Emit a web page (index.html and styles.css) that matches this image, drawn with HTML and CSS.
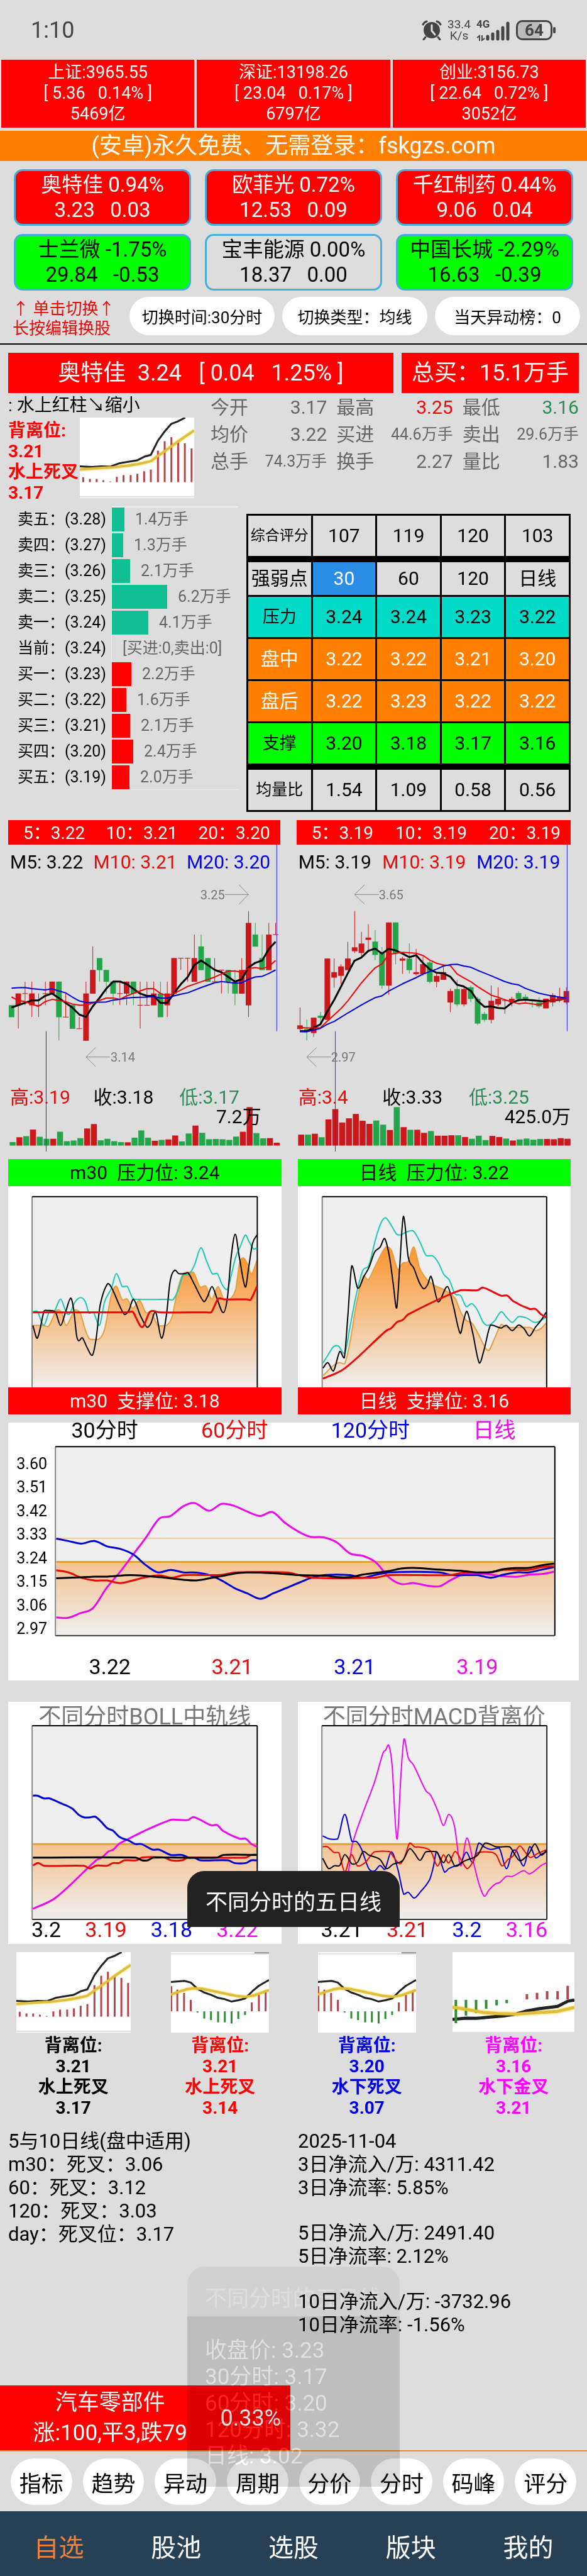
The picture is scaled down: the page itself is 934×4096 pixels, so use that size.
FILE: index.html
```html
<!DOCTYPE html>
<html lang="zh-CN">
<head>
<meta charset="utf-8">
<meta name="viewport" content="width=device-width, initial-scale=1">
<title>自选</title>
<link rel="stylesheet" href="styles.css">
</head>
<body>
<svg width="0" height="0" class="defs" aria-hidden="true">
  <defs>
    <linearGradient id="fade" x1="0" y1="0" x2="0" y2="1">
      <stop offset="0" stop-color="#ff8000" stop-opacity=".8"/>
      <stop offset="1" stop-color="#ff8000" stop-opacity="0"/>
    </linearGradient>
    <linearGradient id="fadeSoft" x1="0" y1="0" x2="0" y2="1">
      <stop offset="0" stop-color="#ff8000" stop-opacity=".4"/>
      <stop offset="1" stop-color="#ff8000" stop-opacity="0"/>
    </linearGradient>
  </defs>
</svg>
<div class="page">
  <header class="status">
    <span class="clock">1:10</span>
    <div class="status-icons">
      <svg class="alarm" viewBox="0 0 32 32" width="32" height="32"><circle cx="16" cy="16" r="13" fill="#444"/><path d="M2 7 Q4 3 8 2M30 7Q28 3 24 2M6 27l-3 4M26 27l3 4" stroke="#444" stroke-width="3" fill="none" stroke-linecap="round"/><path d="M16 8v9l5 6" stroke="#ddd" stroke-width="3" fill="none" stroke-linecap="round"/></svg>
      <span class="speed">33.4<br>K/s</span>
      <div class="signal"><b>4G</b>
        <svg viewBox="0 0 54 32" width="54" height="32"><path d="M5 31v-8l-4 3M9 22v8l4-3" stroke="#444" stroke-width="2" fill="none"/><path d="M18 28v-4M26 28v-8M34 28V16M42 28V10M50 28V3" stroke="#444" stroke-width="5" stroke-linecap="round"/></svg>
      </div>
      <div class="battery"><span>64</span></div>
    </div>
  </header>

  <section class="indices">
    <div>上证:3965.55<br>[ 5.36 &nbsp; 0.14% ]<br>5469亿</div>
    <div>深证:13198.26<br>[ 23.04 &nbsp; 0.17% ]<br>6797亿</div>
    <div>创业:3156.73<br>[ 22.64 &nbsp; 0.72% ]<br>3052亿</div>
  </section>
  <p class="promo">(安卓)永久免费、无需登录：fskgzs.com</p>

  <section class="stocks">
    <button class="up">奥特佳 0.94%<br>3.23 &nbsp; 0.03</button>
    <button class="up">欧菲光 0.72%<br>12.53 &nbsp; 0.09</button>
    <button class="up">千红制药 0.44%<br>9.06 &nbsp; 0.04</button>
    <button class="down">士兰微 -1.75%<br>29.84 &nbsp; -0.53</button>
    <button>宝丰能源 0.00%<br>18.37 &nbsp; 0.00</button>
    <button class="down">中国长城 -2.29%<br>16.63 &nbsp; -0.39</button>
  </section>

  <section class="switches">
    <p>↑ 单击切换↑<br>长按编辑换股</p>
    <button>切换时间:30分时</button>
    <button>切换类型：均线</button>
    <button>当天异动榜：0</button>
  </section>

  <section class="title-row">
    <h1>奥特佳&ensp;3.24 &ensp;[ 0.04 &nbsp; 1.25% ]</h1>
    <h2>总买：15.1万手</h2>
  </section>

  <section class="info">
    <div>
      <p class="trend">: 水上红柱↘缩小</p>
      <div class="signal-row">
        <p>背离位:<br>3.21<br>水上死叉<br>3.17</p>
        <svg class="thumb" data-thumb="rise"></svg>
      </div>
    </div>
    <dl class="quotes">
      <div><dt>今开</dt><dd>3.17</dd></div><div><dt>最高</dt><dd class="red">3.25</dd></div><div><dt>最低</dt><dd class="green">3.16</dd></div>
      <div><dt>均价</dt><dd>3.22</dd></div><div><dt>买进</dt><dd class="vol">44.6万手</dd></div><div><dt>卖出</dt><dd class="vol">29.6万手</dd></div>
      <div><dt>总手</dt><dd class="vol">74.3万手</dd></div><div><dt>换手</dt><dd>2.27</dd></div><div><dt>量比</dt><dd>1.83</dd></div>
    </dl>
  </section>

  <section class="depth">
    <ul class="book">
      <li><span>卖五：(3.28)</span><i class="ask" style="width:20px"></i><em>1.4万手</em></li>
      <li><span>卖四：(3.27)</span><i class="ask" style="width:18px"></i><em>1.3万手</em></li>
      <li><span>卖三：(3.26)</span><i class="ask" style="width:29px"></i><em>2.1万手</em></li>
      <li><span>卖二：(3.25)</span><i class="ask" style="width:88px"></i><em>6.2万手</em></li>
      <li><span>卖一：(3.24)</span><i class="ask" style="width:58px"></i><em>4.1万手</em></li>
      <li><span>当前：(3.24)</span><i></i><em>[买进:0,卖出:0]</em></li>
      <li><span>买一：(3.23)</span><i class="bid" style="width:31px"></i><em>2.2万手</em></li>
      <li><span>买二：(3.22)</span><i class="bid" style="width:23px"></i><em>1.6万手</em></li>
      <li><span>买三：(3.21)</span><i class="bid" style="width:29px"></i><em>2.1万手</em></li>
      <li><span>买四：(3.20)</span><i class="bid" style="width:34px"></i><em>2.4万手</em></li>
      <li><span>买五：(3.19)</span><i class="bid" style="width:28px"></i><em>2.0万手</em></li>
    </ul>
    <table class="score">
      <tbody>
        <tr><th scope="row" class="s">综合评分</th><td>107</td><td>119</td><td>120</td><td>103</td></tr>
        <tr class="head thick"><th scope="row">强弱点</th><td class="picked">30</td><td>60</td><td>120</td><td>日线</td></tr>
        <tr class="press"><th scope="row" class="m">压力</th><td>3.24</td><td>3.24</td><td>3.23</td><td>3.22</td></tr>
        <tr class="mid"><th scope="row">盘中</th><td>3.22</td><td>3.22</td><td>3.21</td><td>3.20</td></tr>
        <tr class="mid"><th scope="row">盘后</th><td>3.22</td><td>3.23</td><td>3.22</td><td>3.22</td></tr>
        <tr class="supp"><th scope="row" class="m">支撑</th><td>3.20</td><td>3.18</td><td>3.17</td><td>3.16</td></tr>
        <tr class="thick last"><th scope="row" class="n">均量比</th><td>1.54</td><td>1.09</td><td>0.58</td><td>0.56</td></tr>
      </tbody>
    </table>
  </section>

  <section class="pair kline">
    <article>
      <p class="ma-bar"><span>5：3.22</span><span>10：3.21</span><span>20：3.20</span></p>
      <div class="kchart">
        <svg data-k="m30" viewBox="22 144 730 1396" preserveAspectRatio="none"></svg>
        <div class="overlay">
          <p class="ma"><span>M5: 3.22</span><span class="r">M10: 3.21</span><span class="b">M20: 3.20</span></p>
          <p class="hl"><span class="r">高:3.19</span><span>收:3.18</span><span class="g">低:3.17</span></p>
          <p class="volume">7.2万</p>
        </div>
        <span class="mark high-a">3.25</span><span class="mark low-a">3.14</span>
      </div>
    </article>
    <article>
      <p class="ma-bar"><span>5：3.19</span><span>10：3.19</span><span>20：3.19</span></p>
      <div class="kchart">
        <svg data-k="day" viewBox="795 144 730 1396" preserveAspectRatio="none"></svg>
        <div class="overlay">
          <p class="ma"><span>M5: 3.19</span><span class="r">M10: 3.19</span><span class="b">M20: 3.19</span></p>
          <p class="hl"><span class="r">高:3.4</span><span>收:3.33</span><span class="g">低:3.25</span></p>
          <p class="volume">425.0万</p>
        </div>
        <span class="mark high-b">3.65</span><span class="mark low-b">2.97</span>
      </div>
    </article>
  </section>

  <section class="pair levels">
    <article>
      <h3 class="lv-top">m30&ensp;压力位: 3.24</h3>
      <svg data-plot="lv30" viewBox="22 223 730 1180" preserveAspectRatio="none"></svg>
      <h3 class="lv-bottom">m30&ensp;支撑位: 3.18</h3>
    </article>
    <article>
      <h3 class="lv-top">日线&ensp;压力位: 3.22</h3>
      <svg data-plot="lvday" viewBox="795 223 730 1180" preserveAspectRatio="none"></svg>
      <h3 class="lv-bottom">日线&ensp;支撑位: 3.16</h3>
    </article>
  </section>

  <section class="ma5">
    <p class="legend"><span>30分时</span><span class="r">60分时</span><span class="b">120分时</span><span class="p">日线</span></p>
    <div class="ma5-plot">
      <ol class="axis"><li>3.60</li><li>3.51</li><li>3.42</li><li>3.33</li><li>3.24</li><li>3.15</li><li>3.06</li><li>2.97</li></ol>
      <svg data-plot="ma5" viewBox="146 191 1338 1039" preserveAspectRatio="none"></svg>
    </div>
    <p class="values"><span>3.22</span><span class="r">3.21</span><span class="b">3.21</span><span class="p">3.19</span></p>
  </section>

  <section class="pair studies">
    <article>
      <h3>不同分时BOLL中轨线</h3>
      <svg data-plot="boll" viewBox="84 201 606 1221" preserveAspectRatio="none"></svg>
      <p><span>3.2</span><span class="r">3.19</span><span class="b">3.18</span><span class="p">3.22</span></p>
    </article>
    <article>
      <h3>不同分时MACD背离价</h3>
      <svg data-plot="macd" viewBox="858 201 604 1221" preserveAspectRatio="none"></svg>
      <p><span>3.21</span><span class="r">3.21</span><span class="b">3.2</span><span class="p">3.16</span></p>
    </article>
    <div class="toast" role="status">不同分时的五日线</div>
  </section>

  <section class="patterns">
    <figure><svg class="thumb" data-thumb="rise"></svg><figcaption>背离位:<br>3.21<br>水上死叉<br>3.17</figcaption></figure>
    <figure class="r"><svg class="thumb narrow" data-thumb="cross"></svg><figcaption>背离位:<br>3.21<br>水上死叉<br>3.14</figcaption></figure>
    <figure class="b"><svg class="thumb narrow" data-thumb="cross"></svg><figcaption>背离位:<br>3.20<br>水下死叉<br>3.07</figcaption></figure>
    <figure class="p"><svg class="thumb wide" data-thumb="golden"></svg><figcaption>背离位:<br>3.16<br>水下金叉<br>3.21</figcaption></figure>
  </section>

  <section class="pair notes">
    <p>5与10日线(盘中适用)<br>m30：死叉：3.06<br>60：死叉：3.12<br>120：死叉：3.03<br>day：死叉位：3.17</p>
    <div>
      <p>2025-11-04<br>3日净流入/万: 4311.42<br>3日净流率: 5.85%</p>
      <p>5日净流入/万: 2491.40<br>5日净流率: 2.12%</p>
      <p>10日净流入/万: -3732.96<br>10日净流率: -1.56%</p>
    </div>
  </section>

  <footer>
    <div class="sector"><p>汽车零部件<br>涨:100,平3,跌79</p><strong>0.33%</strong></div>
    <div class="tools">
      <button>指标</button><button>趋势</button><button>异动</button><button>周期</button><button>分价</button><button>分时</button><button>码峰</button><button>评分</button>
    </div>
    <nav>
      <a href="#" class="on">自选</a><a href="#">股池</a><a href="#">选股</a><a href="#">版块</a><a href="#">我的</a>
    </nav>
  </footer>

  <div class="ghost">
    <p class="ghost-title"><span>不同分时的五日线</span></p>
    <p class="ghost-body"><span>收盘价: 3.23<br>30分时: 3.17<br>60分时: 3.20<br>120分时: 3.32<br>日线: 3.02</span></p>
  </div>
</div>
<script src="charts.js"></script>
</body>
</html>
```
FILE: styles.css
```css
* { box-sizing: border-box; }
body { margin: 0; background: #ddd; color: #000; font-family: Roboto, "Noto Sans CJK SC", sans-serif; font-size: 30px; }
p, h1, h2, h3, ul, ol, dl, dd, figure { margin: 0; padding: 0; font-weight: 400; }
ul, ol { list-style: none; }
button { border: 0; padding: 0; margin: 0; background: none; font: inherit; color: #000; white-space: nowrap; }
svg { display: block; }
.defs { position: absolute; }
.page { position: relative; min-height: 100vh; display: flex; flex-direction: column; overflow: hidden; }
.r, .red { color: #e60a0a; }
.b { color: #0000e6; }
.g, .green { color: #2e8b57; }
.p { color: #eb0aeb; }

.status { height: 95px; padding: 0 50px 0 49px; display: flex; justify-content: space-between; align-items: center; color: #444; }
.clock { font-size: 36px; }
.status-icons { display: flex; align-items: center; gap: 9px; }
.speed { font-size: 19px; line-height: 18px; text-align: center; }
.signal { height: 36px; width: 54px; display: flex; flex-direction: column; font-size: 17px; line-height: 16px; }
.signal svg { margin-top: -12px; }
.battery { position: relative; width: 58px; height: 32px; border: 3px solid #444; border-radius: 10px; margin-right: 5px; background: linear-gradient(90deg, #bbb 68%, #ddd 68%); font-size: 26px; line-height: 27px; font-weight: 700; text-align: center; }
.battery::after { content: ""; position: absolute; right: -8px; top: 8px; width: 4px; height: 10px; border-radius: 2px; background: #444; }

.indices { display: grid; grid-template-columns: repeat(3, 1fr); gap: 4px; padding: 0 2px; margin-bottom: 5px; }
.indices div { background: #f00; color: #fff; text-align: center; font-size: 27px; line-height: 33px; padding: 4px 0 5px; }
.promo { background: #ff8000; color: #fff; text-align: center; font-size: 36px; line-height: 48px; height: 48px; }

.stocks { display: grid; grid-template-columns: repeat(3, 1fr); gap: 13px 22px; padding: 13px 22px 0; }
.stocks button { height: 90px; border: 3px solid #46aedc; border-radius: 14px; font-size: 33px; line-height: 40px; }
.stocks .up { background: #f00; color: #fff; }
.stocks .down { background: #0f0; }

.switches { display: grid; grid-template-columns: 174px 1fr 1fr 1fr; gap: 12px; padding: 10px 11px 13px 20px; border-bottom: 2px solid #000; font-size: 26px; }
.switches p { color: #e60a0a; font-size: 26px; line-height: 31px; height: 61px; white-space: nowrap; padding-top: 4px; }
.switches button { height: 61px; background: #fff; border-radius: 31px; }

.title-row { display: grid; grid-template-columns: 613fr 282fr; gap: 13px; padding: 13px 13px 0; }
.title-row h1, .title-row h2 { background: #f00; color: #fff; font-size: 36px; line-height: 64px; height: 64px; text-align: center; white-space: nowrap; }

.info { display: grid; grid-template-columns: 296px 1fr; gap: 26px; padding: 0 13px; height: 180px; }
.trend { font-size: 28px; line-height: 39px; }
.signal-row { display: flex; justify-content: space-between; align-items: flex-start; }
.signal-row p { color: #f00; font-size: 28px; line-height: 33px; font-weight: 700; padding-top: 4px; white-space: nowrap; }
.quotes { display: grid; grid-template-columns: repeat(3, 1fr); column-gap: 15px; align-content: start; line-height: 43px; color: #666; white-space: nowrap; padding-top: 1px; }
.quotes div { display: flex; justify-content: space-between; }
.quotes .vol { font-size: 25px; }
.quotes .red { color: #e60a0a; }
.quotes .green { color: #2e8b57; }

.depth { display: grid; grid-template-columns: 379fr 516fr; gap: 13px; padding-right: 26px; }
.book { margin-left: 28px; font-size: 25px; line-height: 41px; align-self: start; position: relative; }
.book::before { content: ""; position: absolute; left: 149px; right: 0; top: 0; bottom: 0; border: 1px solid #eee; border-width: 2px 0 1px 1px; }
.book li { height: 41px; display: flex; align-items: center; white-space: nowrap; }
.book span { width: 150px; }
.book i { height: 38px; position: relative; }
.book .ask { background: #11bf95; }
.book .bid { background: #f00; }
.book em { font-style: normal; color: #666; margin-left: 17px; }
.score { width: 100%; margin-top: 12px; background: #000; border-spacing: 3px; table-layout: fixed; text-align: center; }
.score th, .score td { padding: 0; height: 64px; line-height: 52px; background: #ddd; font-weight: 400; white-space: nowrap; background-clip: padding-box; }
.score .head th, .score .head td { height: 59px; }
.score .thick th, .score .thick td { border-top: 7px solid #000; }
.score .last th, .score .last td { height: 71px; }
.score .s { font-size: 23px; }
.score .m { font-size: 27px; }
.score .n { font-size: 25px; }
.score .picked { background-color: #2a8ee4; color: #fff; }
.score .press > * { background: #00dbc8; }
.score .mid > * { background: #ff8000; color: #fff; }
.score .supp > * { background: #0f0; }

.pair { display: grid; grid-template-columns: 1fr 1fr; gap: 26px; padding: 0 26px 0 13px; }
.kline { margin-top: 13px; }
.ma-bar { display: flex; justify-content: space-between; background: #f00; color: #fff; font-size: 28px; line-height: 41px; height: 39px; padding: 0 16px 0 24px; }
.kchart { display: grid; position: relative; }
.kchart svg, .overlay { grid-area: 1 / 1; }
.kchart svg { width: 100%; height: 488px; }
.overlay { display: flex; flex-direction: column; padding: 8px 0 41px 3px; white-space: nowrap; }
.overlay .ma { display: grid; grid-template-columns: 133fr 149fr 149fr; line-height: 40px; margin-bottom: auto; }
.overlay .hl { display: grid; grid-template-columns: 133fr 137fr 161fr; line-height: 35px; }
.overlay .volume { line-height: 28px; padding-left: 328px; }
.mark { position: absolute; font-size: 20px; line-height: 24px; color: #777; }
.high-a { right: 88px; top: 68px; }
.low-a { left: 163px; top: 326px; }
.high-b { left: 131px; top: 68px; }
.low-b { left: 55px; top: 326px; }

.levels { margin-top: 12px; }
.levels h3 { font-size: 30px; line-height: 43px; height: 43px; text-align: center; }
.levels svg { width: 100%; height: 320px; background: #fff; }
.lv-top { background: #0f0; }
.lv-bottom { background: #f00; color: #fff; }

.ma5 { margin: 13px 13px 0; background: #fff; height: 410px; font-size: 34px; }
.legend { display: flex; justify-content: space-evenly; line-height: 24px; }
.ma5-plot { display: grid; grid-template-columns: 62px 1fr; gap: 12px; padding: 13px 37px 0 0; }
.ma5-plot svg { width: 100%; height: 303px; }
.axis { height: 286px; margin-top: 17px; display: flex; flex-direction: column; justify-content: space-between; text-align: right; font-size: 25px; line-height: 24px; }
.values { display: flex; justify-content: space-evenly; line-height: 40px; margin-top: 28px; }

.studies { margin-top: 34px; position: relative; }
.studies article { background: #fff; height: 385px; padding: 0 37px; font-size: 34px; }
.studies h3 { height: 37px; line-height: 48px; font-size: 36px; color: #777; text-align: center; white-space: nowrap; display: flex; justify-content: center; }
.studies svg { width: 100%; height: 310px; }
.studies p { display: flex; justify-content: space-between; line-height: 30px; }
.toast { position: absolute; left: 50%; bottom: 27px; width: 338px; margin-left: -169px; height: 89px; padding-top: 6px; border-radius: 27px 27px 0 0; background: #222; color: #fff; font-size: 35px; line-height: 89px; text-align: center; }

.patterns { display: grid; grid-template-columns: repeat(4, 1fr); padding-top: 13px; text-align: center; }
.thumb { width: 182px; height: 128px; background: #fff; flex: none; }
.patterns .thumb { margin: 0 auto; }
.patterns .narrow { width: 156px; }
.patterns .wide { width: 194px; }
.patterns figcaption { font-size: 28px; line-height: 33px; font-weight: 700; padding-top: 4px; }
.patterns .r { color: #f00; }
.patterns .p { color: #f0f; }

.notes { margin-top: 18px; padding-right: 0; font-size: 31px; line-height: 37px; white-space: nowrap; grid-template-columns: 435fr 460fr; }
.notes div p + p { margin-top: 35px; }

footer { margin-top: auto; }
.sector { width: 462px; height: 103px; background: #f00; color: #fff; display: flex; align-items: center; font-size: 36px; padding: 0 15px 0 0; }
.sector p { flex: 1; text-align: center; font-size: 35px; line-height: 48px; }
.sector strong { font-weight: 400; }
.tools { border-top: 2px solid #e8862c; display: grid; grid-template-columns: repeat(8, 1fr); gap: 17px; padding: 11px 17px 10px; }
.tools button { height: 74px; border-radius: 37px; background: #fff; font-size: 35px; }
nav { height: 103px; background: #284053; display: grid; grid-template-columns: repeat(5, 1fr); align-items: center; text-align: center; font-size: 40px; }
nav a { color: #fff; text-decoration: none; padding-top: 6px; }
nav .on { color: #f0803c; }

.ghost { position: absolute; left: 50%; bottom: 142px; width: 338px; height: 350px; margin-left: -169px; border-radius: 27px 27px 0 0; background: rgba(0, 0, 0, .05); font-size: 35px; pointer-events: none; }
.ghost p { padding-left: 28px; white-space: nowrap; }
.ghost span { display: block; mix-blend-mode: plus-lighter; }
.ghost-title { height: 79px; line-height: 103px; color: #0c0c0c; }
.ghost-body { height: 271px; padding-top: 34px; line-height: 42px; background: rgba(0, 0, 0, .09); color: #232323; }
```
FILE: charts.js
```js
const NS = 'http://www.w3.org/2000/svg';
const RED = '#cb181c', GREEN = '#25a54a';
const INK = { k: '#000', r: '#e60a0a', b: '#0000d2', p: '#eb0aeb', t: '#1cc8b4', o: '#e0a040' };

function add(svg, tag, attrs) {
  const el = document.createElementNS(NS, tag);
  for (const key in attrs) el.setAttribute(key, attrs[key]);
  svg.appendChild(el);
}
const points = s => s.trim().split(/\s+/).map(p => p.split(',').map(Number));

function smooth(pts) {
  let d = `M${pts[0]}`;
  for (let i = 0; i < pts.length - 1; i++) {
    const a = pts[i - 1] || pts[i], b = pts[i], c = pts[i + 1], e = pts[i + 2] || c;
    const lo = Math.min(b[1], c[1]) - 4, hi = Math.max(b[1], c[1]) + 4;
    const clamp = v => Math.max(lo, Math.min(hi, v));
    const dx = (c[0] - b[0]) / 3;
    const s1 = (c[1] - a[1]) / (c[0] - a[0] || 1), s2 = (e[1] - b[1]) / (e[0] - b[0] || 1);
    d += `C${b[0] + dx},${clamp(b[1] + s1 * dx)} ${c[0] - dx},${clamp(c[1] - s2 * dx)} ${c}`;
  }
  return d;
}
function stroke(svg, d, color, width) {
  add(svg, 'path', { d, fill: 'none', stroke: color, 'stroke-width': width, 'stroke-linejoin': 'round', 'vector-effect': 'non-scaling-stroke' });
}

/* Candles: colour, body top, body bottom, high, low */
const K = {
  m30: {
    x: 31, vx: 34,
    candles: `G874,928,874,928 R821,874,821,981 R820,822,767,874 R821,874,767,928 R873,875,821,928 R820,822,767,874 R767,821,767,821 G767,928,767,1035 R927,929,821,928 G874,981,874,981 R980,982,928,981 R821,1035,767,1035 R714,821,607,821 G660,714,660,767 G714,767,714,821 G767,821,767,874 R820,822,767,874 R767,821,767,874 G767,821,767,874 R873,875,767,981 R873,875,767,874 R821,874,767,874 G821,928,767,928 R821,874,767,928 R660,821,660,821 R659,661,660,714 R659,661,660,767 R660,767,553,767 G607,714,553,714 G660,767,660,767 R766,768,660,767 R713,715,714,821 G714,767,714,821 G767,821,714,874 R714,821,660,821 R500,874,446,928 G553,607,500,607 G660,714,553,714 R553,714,500,714 R552,554,500,553`,
    vol: `G1497 R1475 G1470 R1440 G1473 G1482 R1482 G1450 G1493 G1490 G1479 R1435 R1415 G1489 G1482 G1493 G1497 R1498 G1477 G1444 G1477 R1491 G1487 R1485 R1467 G1494 G1458 R1422 G1455 G1484 G1483 G1484 G1487 G1472 R1450 R1338 G1456 G1480 R1479 R1500`,
    k: `31,885 67,864 85,853 103,853 121,832 140,821 158,842 194,885 213,917 231,928 249,880 267,842 285,800 304,767 322,767 340,778 358,800 376,821 394,832 413,832 431,864 449,864 467,821 486,778 504,746 522,692 540,671 558,692 577,714 595,725 613,746 631,767 649,757 667,703 685,682 704,671 722,618 740,586`,
    r: `31,837 49,853 67,858 85,869 103,880 121,858 140,848 176,858 194,869 213,874 231,874 249,864 267,853 285,842 304,842 322,848 340,832 358,821 376,810 394,799 413,799 431,821 449,832 467,821 486,805 504,789 540,768 577,746 613,719 631,719 649,725 667,708 685,703 704,708 722,698 740,671`,
    b: `31,797 49,795 67,794 85,799 121,805 140,800 158,810 176,818 194,837 213,855 231,862 285,860 304,851 322,848 340,842 358,839 394,838 413,835 431,842 449,842 467,832 486,824 504,818 540,794 577,772 595,767 631,774 649,773 667,757 685,746 704,743 722,730 740,714`,
    guides: 'M743,144V993M124,993V1540',
    arrows: 'M604,371H667M642,327L667,371L642,415M295,1110H231M257,1067L231,1110L257,1154'
  },
  day: {
    x: 804, vx: 807,
    candles: `R966,982,885,990 G983,992,940,1035 R931,1000,931,1018 G922,931,905,960 R662,940,662,940 R724,748,662,795 R698,740,688,778 R662,714,586,714 R611,628,446,637 R594,636,541,650 R567,576,506,628 G585,645,533,670 G637,784,610,800 R498,784,498,827 G498,637,498,688 R662,671,654,732 G662,714,593,730 R724,732,618,740 R688,732,654,740 G680,767,671,775 R741,767,724,793 R724,758,688,758 R810,861,800,906 G801,870,758,880 R801,870,790,880 G793,845,785,861 G845,957,836,965 G914,940,905,949 R854,940,785,957 R845,870,793,880 R852,854,845,914 R845,861,836,880 G819,845,810,861 G836,845,825,861 G850,855,845,885 G862,879,838,888 R845,888,845,888 R828,861,819,880 R836,850,795,861 R810,861,793,870`,
    vol: `R1463 G1463 R1459 G1475 R1394 R1347 R1408 R1389 R1369 R1400 R1414 G1399 G1418 R1442 G1338 R1429 G1441 R1441 R1455 G1447 R1468 R1468 R1466 G1466 R1474 G1482 G1468 G1488 R1469 R1474 G1481 R1490 G1485 G1481 G1486 G1483 R1483 R1484 R1479 R1482`,
    k: `804,992 822,993 858,962 876,905 895,850 913,790 931,730 949,672 967,658 986,627 1004,617 1022,640 1040,618 1058,625 1077,640 1095,656 1113,647 1131,682 1150,712 1168,727 1186,729 1204,745 1222,781 1240,789 1259,810 1277,855 1295,882 1313,880 1331,887 1349,889 1368,863 1386,851 1404,849 1422,852 1458,858 1476,853 1495,850 1513,843`,
    r: `804,976 822,978 858,977 876,948 913,890 931,855 967,774 986,737 1004,704 1022,687 1040,643 1077,634 1113,638 1131,648 1150,670 1168,684 1186,692 1204,694 1222,732 1240,750 1259,768 1277,790 1313,829 1331,838 1349,850 1386,868 1404,864 1440,873 1476,852 1513,845`,
    b: `804,995 822,995 858,980 876,962 895,948 931,910 967,874 986,856 1004,840 1022,832 1040,810 1077,777 1113,749 1131,733 1168,710 1186,696 1204,690 1222,688 1240,696 1259,702 1277,716 1313,741 1349,767 1368,777 1386,782 1404,798 1440,820 1476,833 1513,842`,
    guides: 'M1515,144V993M898,993V1540',
    arrows: 'M1014,371H949M976,327L949,371L976,415M887,1110H822M848,1067L822,1110L848,1154'
  }
};

document.querySelectorAll('[data-k]').forEach(svg => {
  const c = K[svg.dataset.k];
  c.candles.split(' ').forEach((s, i) => {
    const fill = s[0] === 'R' ? RED : GREEN;
    const [top, bottom, high, low] = s.slice(1).split(',').map(Number);
    const x = c.x + 18.18 * i;
    stroke(svg, `M${x},${high}V${low}`, fill, 1);
    add(svg, 'rect', { x: x - 7.5, y: top, width: 15, height: bottom - top + 1, fill });
  });
  c.vol.split(' ').forEach((s, i) => {
    const top = Number(s.slice(1));
    add(svg, 'rect', { x: c.vx + 18.18 * i - 8, y: top, width: 16, height: 1513 - top, fill: s[0] === 'R' ? RED : GREEN });
  });
  stroke(svg, 'M' + c.k, '#000', 3);
  stroke(svg, 'M' + c.r, '#e60a0a', 2);
  stroke(svg, 'M' + c.b, '#0000d2', 2);
  stroke(svg, c.guides, '#2a2aff', 1);
  stroke(svg, c.arrows, '#888', 1);
});

/* Line plots: box is left, top, right, bottom of the frame */
const PLOTS = {
  lv30: {
    box: [86, 285, 688, 1410], w: 2, open: true,
    area: `88,1040 115,1040 130,1045 152,950 165,965 177,1040 200,950 215,970 228,1065 240,1120 265,1120 280,1060 298,860 311,810 327,890 340,885 355,940 373,892 390,965 405,965 422,1040 445,1040 460,990 475,830 490,735 505,728 518,730 535,815 550,808 566,885 583,812 600,895 615,885 630,830 640,680 650,643 662,680 672,738 687,660`,
    lines: [
      ['t', `88,960 100,957 117,1040 132,960 145,960 162,886 178,968 186,972 200,905 215,877 228,900 238,967 250,962 266,1040 280,900 298,822 311,736 327,812 340,810 355,880 370,887 450,887 462,890 475,840 490,745 505,740 520,685 537,585 552,660 568,738 581,735 594,800 608,830 620,730 630,640 642,580 656,510 665,545 678,592 687,585`],
      ['k', `88,1040 100,1115 118,955 125,952 148,960 162,1040 175,965 189,880 197,945 205,1100 211,1130 220,1112 233,1170 247,1215 257,1120 268,920 288,795 300,825 320,925 333,975 345,950 357,887 375,980 393,1050 403,1030 416,960 432,1115 445,980 455,780 467,716 478,736 495,736 503,731 520,800 545,900 555,870 567,812 580,880 597,965 608,880 618,640 629,505 640,640 656,815 665,700 675,560 687,510`],
      ['r', `88,963 340,963 355,960 380,1050 400,962 410,955 425,963 553,963 565,963 582,887 590,882 600,887 660,887 670,890 687,812`]
    ]
  },
  lvday: {
    box: [860, 285, 1460, 1410], w: 2, open: true,
    area: `862,1335 890,1275 905,1258 920,1265 935,1130 950,930 970,750 983,772 1000,700 1030,580 1045,600 1062,712 1075,675 1090,665 1105,580 1120,700 1140,770 1160,805 1185,830 1215,880 1230,960 1245,1010 1260,1025 1275,1080 1303,1187 1320,1120 1338,1035 1355,1052 1415,1052 1430,1070 1445,1058 1459,1025`,
    lines: [
      ['t', `862,1260 875,1215 890,1165 903,1160 920,1205 935,1040 950,870 968,720 985,685 1003,530 1018,435 1030,410 1045,455 1060,507 1072,507 1085,492 1103,485 1120,545 1138,630 1155,632 1170,670 1185,740 1200,775 1215,855 1230,865 1245,930 1260,912 1275,950 1290,1020 1303,1040 1320,1015 1338,960 1352,990 1368,1022 1385,988 1405,995 1430,1022 1459,992`],
      ['k', `862,1290 875,1258 890,1307 907,1192 919,1230 928,1000 939,690 955,822 972,750 985,700 1000,610 1015,580 1027,530 1040,640 1050,800 1059,938 1067,700 1077,400 1090,640 1105,705 1120,790 1132,825 1142,800 1151,752 1170,902 1195,812 1210,920 1229,1087 1238,1010 1247,957 1262,1080 1280,1260 1293,1180 1310,1038 1338,1055 1352,1040 1368,1070 1385,1038 1400,1060 1414,1102 1430,1050 1445,1010 1459,962`],
      ['r', `862,1352 920,1292 1030,1073 1045,1055 1060,1020 1075,1008 1090,975 1230,833 1275,833 1290,818 1338,865 1355,865 1370,897 1414,943 1430,943 1445,975 1459,992`]
    ]
  },
  ma5: {
    box: [148, 195, 1482, 1226], w: 3, soft: true, guide: 'M150,695H1480',
    area: '150,824 1480,824',
    lines: [
      ['p', `150,1126 180,1129 215,1103 248,1076 285,965 320,880 355,785 390,690 425,588 455,574 490,520 520,503 558,545 592,507 625,518 660,549 695,573 727,551 762,612 800,662 830,687 865,690 900,718 935,778 968,790 1003,825 1040,910 1072,945 1105,939 1140,953 1173,957 1205,922 1240,890 1280,888 1310,893 1345,902 1380,905 1415,893 1448,890 1480,877`],
      ['b', `150,697 183,710 217,724 252,710 286,739 320,752 355,782 390,842 422,881 456,867 490,881 524,882 560,896 592,925 627,967 660,995 696,1025 730,995 765,966 800,936 835,908 870,895 935,896 968,910 1000,896 1040,881 1173,881 1208,896 1275,896 1312,910 1345,893 1380,881 1412,881 1445,867 1480,852`],
      ['r', `150,869 183,881 217,910 252,925 286,925 320,939 355,925 388,908 425,897 458,910 492,896 590,895 630,881 765,881 800,896 835,910 1000,910 1040,896 1200,896 1240,882 1310,881 1345,867 1412,867 1448,852 1480,847`],
      ['k', `150,913 217,908 252,904 286,904 350,896 420,906 490,921 524,925 560,913 592,901 627,887 658,881 730,885 800,896 870,899 900,907 935,907 968,893 1040,873 1072,860 1105,856 1175,866 1240,874 1275,881 1312,879 1345,863 1380,857 1412,856 1448,842 1480,833`]
    ]
  },
  boll: {
    box: [86, 205, 688, 1418], w: 3, soft: true,
    area: '88,946 687,946',
    lines: [
      ['p', `88,1352 150,1280 257,1048 272,1031 290,993 303,981 320,942 457,794 502,796 518,777 565,829 580,826 597,865 640,912 657,912 672,945 687,963`],
      ['b', `88,643 100,643 117,660 132,660 162,690 192,722 210,762 225,779 240,779 255,775 270,805 287,847 302,862 320,902 345,925 362,946 378,946 408,981 425,981 457,1014 487,1014 505,1031 520,1031 535,1048 610,1048 627,1065 657,1065 672,1048 687,1048`],
      ['r', `88,1080 102,1065 118,1082 225,1082 240,1099 257,1081 288,1081 302,1065 318,1065 333,1048 365,1048 380,1030 440,1031 457,1048 487,1048 502,1031 657,1031 672,1014 687,1012`],
      ['k', `88,1031 363,1031 380,1048 395,1048 410,1031 580,1031 597,1014 687,1014`]
    ]
  },
  macd: {
    box: [860, 205, 1460, 1418], w: 2, soft: true,
    area: '862,946 1459,946',
    lines: [
      ['p', `862,1370 890,1330 920,1240 932,1105 940,960 968,760 1000,560 1023,375 1030,357 1038,325 1047,450 1060,915 1071,500 1079,287 1090,405 1104,450 1137,612 1150,640 1170,745 1184,830 1198,760 1213,830 1230,1083 1246,908 1262,1040 1278,1190 1293,1273 1305,1235 1322,1197 1335,1185 1352,1148 1368,1148 1398,1113 1414,1133 1445,1080 1459,1063`],
      ['b', `862,895 880,914 902,914 921,760 940,930 952,930 965,975 985,1100 1000,1115 1015,1080 1028,1105 1045,995 1062,1100 1078,1260 1090,1248 1106,1284 1122,1247 1147,1170 1157,1090 1166,995 1187,1122 1198,1100 1215,1083 1230,1065 1245,997 1262,1062 1278,940 1293,965 1310,980 1333,972 1352,1100 1368,990 1378,985 1398,1083 1414,962 1430,1033 1445,1010 1459,995`],
      ['r', `862,963 875,963 892,998 905,1000 921,1120 938,1012 955,1083 975,1063 1000,995 1040,993 1052,1030 1068,1070 1080,1030 1094,940 1107,963 1120,965 1150,990 1168,1083 1184,1013 1198,1065 1215,993 1230,1040 1247,1100 1262,1060 1275,1000 1310,997 1325,1015 1340,1083 1355,1045 1370,1020 1387,958 1400,990 1415,1030 1435,1005 1459,982`],
      ['k', `862,1035 878,1100 893,1082 907,1082 921,1012 940,1070 955,1060 970,993 985,1015 1015,1043 1032,1100 1050,1072 1075,1050 1094,975 1107,1005 1122,1048 1137,995 1166,995 1184,1063 1198,1012 1215,1085 1240,1052 1275,1015 1295,940 1325,963 1360,963 1387,1050 1412,1005 1428,945 1445,1015 1459,985`]
    ]
  }
};

document.querySelectorAll('[data-plot]').forEach(svg => {
  const c = PLOTS[svg.dataset.plot];
  const [l, t, r, b] = c.box;
  add(svg, 'rect', { x: l, y: t, width: r - l, height: b - t, fill: '#efefef' });
  stroke(svg, `M${l},${b}V${t}`, '#888', 2);
  const top = smooth(points(c.area));
  add(svg, 'path', { d: `${top}V${b}H${l + 2}Z`, fill: c.soft ? 'url(#fadeSoft)' : 'url(#fade)' });
  if (c.guide) stroke(svg, c.guide, '#efc9a0', 2);
  stroke(svg, top, INK.o, c.soft ? 3 : 2);
  stroke(svg, `M${l},${t}H${r}`, '#000', 2);
  stroke(svg, `M${r},${t}V${b}`, '#000', 2);
  if (!c.open) stroke(svg, `M${l},${b}H${r}`, '#333', 2);
  c.lines.forEach(([ink, data]) => stroke(svg, smooth(points(data)), INK[ink], ink === 'r' && c.open ? 3 : c.w));
});

/* Small MACD pattern pictures */
const THUMBS = {
  rise: {
    view: '43 92 306 378',
    bars: [['#b5444a', 395, `52,372 70,380 88,380 106,386 124,392 142,370 160,362 179,362 197,356 215,344 233,336 252,247 270,203 288,184 306,203 324,213 342,237`]],
    black: `43,321 75,324 100,321 125,322 150,306 170,300 196,293 215,276 233,267 252,200 270,157 288,121 305,110 325,92`,
    yellow: `43,336 100,328 133,325 170,318 200,310 233,297 252,272 270,250 305,205 349,152`,
    rule: 'M43,463H349'
  },
  cross: {
    view: '457 92 262 378',
    bars: [['#b5444a', 370, `458,252 474,268 492,284 510,316 673,328 692,293 710,279`], ['#2f8c36', 370, `528,376 546,404 564,411 583,422 601,422 619,427 637,406 655,387`]],
    black: `457,232 493,227 510,235 527,263 545,281 565,293 583,307 601,313 619,324 637,318 655,310 675,275 692,250 719,223`,
    yellow: `457,292 475,280 500,266 515,262 540,264 600,286 630,297 655,302 680,295 719,270`,
    rule: 'M457,100H719', tab: 'M680,94H719'
  },
  golden: {
    view: '1209 92 326 378', heavy: true,
    bars: [['#2f8c36', 316, `1218,426 1245,390 1272,378 1299,358 1327,342 1354,332`], ['#a84a4e', 314, `1408,290 1435,283 1462,275 1490,275 1517,250`]],
    black: `1209,408 1245,402 1272,403 1310,397 1345,392 1380,382 1410,367 1440,358 1490,347 1518,322 1535,317`,
    yellow: `1209,350 1250,362 1290,375 1330,381 1380,383 1420,378 1490,370 1535,352`,
    rule: 'M1209,469H1535'
  }
};

document.querySelectorAll('[data-thumb]').forEach(svg => {
  const c = THUMBS[svg.dataset.thumb];
  svg.setAttribute('viewBox', c.view);
  svg.setAttribute('preserveAspectRatio', 'none');
  stroke(svg, c.rule, '#ddd', 2);
  if (c.tab) stroke(svg, c.tab, '#999', 3);
  stroke(svg, 'M' + c.yellow, '#fdf3b8', c.heavy ? 9 : 7);
  stroke(svg, 'M' + c.black, '#222', c.heavy ? 5 : 3);
  c.bars.forEach(([color, base, data]) => points(data).forEach(([x, y]) => stroke(svg, `M${x},${base}V${y}`, color, c.heavy ? 4 : 3)));
  stroke(svg, 'M' + c.yellow, '#e0be3c', c.heavy ? 5 : 4);
});
```
